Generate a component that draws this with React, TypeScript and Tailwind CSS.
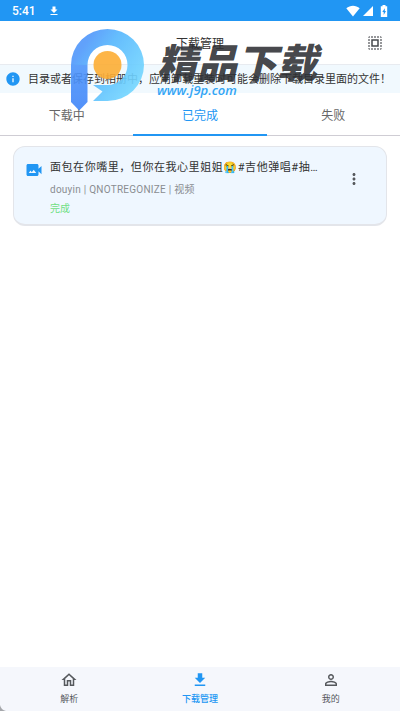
import React from "react";
import { MdDownload, MdSelectAll, MdInfo, MdMoreVert } from "react-icons/md";
import { MdOutlineHome, MdPersonOutline, MdSignalCellular4Bar } from "react-icons/md";

function StatusBar() {
  return (
    <div className="flex h-[21px] items-center bg-[#2196f3] px-3 pt-px text-white">
      <span className="font-[Roboto,sans-serif] text-xs leading-5 font-medium">5:41</span>
      <MdDownload className="ml-3 size-3" />
      <div className="ml-auto flex items-center gap-0.5">
        <svg viewBox="0 0 14 12" className="h-3 w-3.5" fill="currentColor">
          <path d="M0.3 3.2C4.2-.2 9.8-.2 13.7 3.2L7 11.6Z" />
        </svg>
        <MdSignalCellular4Bar className="size-3" />
        <svg viewBox="0 0 8 12" className="ml-1 h-3 w-2" fill="currentColor">
          <path fillRule="evenodd" d="M2.5 0h3v1.2H7.2V12H.8V1.2h1.7ZM4.8 3.2 2.3 7h1.4v3L6 6H4.8Z" />
        </svg>
      </div>
    </div>
  );
}

function Watermark() {
  return (
    <div className="pointer-events-none absolute top-7 left-[70px] flex">
      <svg viewBox="0 0 76 84" className="h-[84px] w-[76px] shrink-0">
        <defs>
          <linearGradient id="ring" gradientUnits="userSpaceOnUse" x1="4" y1="30" x2="60" y2="68">
            <stop offset="0" stopColor="#5097fb" />
            <stop offset="0.35" stopColor="#55b7fd" />
            <stop offset="1" stopColor="#74d7ff" />
          </linearGradient>
          <linearGradient id="stem" x1="0" y1="0" x2="0" y2="1">
            <stop offset="0" stopColor="#5097fb" />
            <stop offset="1" stopColor="#3f85f9" />
          </linearGradient>
        </defs>
        <g opacity="0.9">
          <path fill="url(#ring)" d="M1 37A36.500 36 0 1 1 37.500 73H23L32.500 63.500L23 57H37.500A20 20 0 1 0 17.500 37Z" />
          <path fill="url(#stem)" d="M1 37H17.500V74L9.200 82.500L1 74Z" />
          <circle cx="37.500" cy="37" r="14" fill="#fdae35" />
        </g>
      </svg>
      <div className="flex flex-col pt-3 pl-[11px] italic">
        <span className="font-['Noto_Sans_CJK_SC',sans-serif] text-[40px] leading-[42px] font-black whitespace-nowrap text-[#2e3034]/90">精品下载</span>
        <span className="font-['Open_Sans',sans-serif] text-[13px] leading-4 font-semibold text-[#33a5f5]">www.j9p.com</span>
      </div>
    </div>
  );
}

function DownloadCard() {
  return (
    <article className="mx-[13px] mt-2.5 flex h-20 rounded-xl border border-b-2 border-[#e3e5ea] bg-[#eff7ff] pr-5 pl-[11px]">
      <svg viewBox="0 0 24 24" className="mt-3.5 size-[18px] shrink-0" fill="#2196f3">
        <path fillRule="evenodd" d="M18 10.480V6c0-1.100-.9-2-2-2H4c-1.100 0-2 .9-2 2v12c0 1.100.9 2 2 2h12c1.100 0 2-.9 2-2v-4.480l4 3.980v-11l-4 3.980zM5 16l2.380-3.170L9 15l2.620-3.500L15 16H5z" />
      </svg>
      <div className="min-w-0 flex-1 pt-2.5 pl-[7px]">
        <h2 className="truncate text-[11px] leading-[22px] tracking-wider text-[#333]">面包在你嘴里，但你在我心里姐姐😭#吉他弹唱#抽…</h2>
        <p className="text-[10px] leading-[22px] tracking-wide text-[#8a8d91]">douyin | QNOTREGONIZE | 视频</p>
        <p className="text-[10px] leading-4 text-[#70df83]">完成</p>
      </div>
      <button aria-label="更多" className="mt-5 flex size-6 shrink-0 items-center justify-center text-[#55585c]">
        <MdMoreVert className="size-[18px]" />
      </button>
    </article>
  );
}

const tabs = ["下载中", "已完成", "失败"];
const nav = [
  { label: "解析", Icon: MdOutlineHome },
  { label: "下载管理", Icon: MdDownload },
  { label: "我的", Icon: MdPersonOutline },
];

export default function App() {
  return (
    <div className="relative flex min-h-screen flex-col overflow-hidden bg-white font-[Roboto,'Noto_Sans_CJK_SC',sans-serif]">
      <StatusBar />
      <header className="relative flex h-11 items-center justify-center border-b border-[#e8ebf0]">
        <h1 className="pt-0.5 text-xs text-[#333]">下载管理</h1>
        <button aria-label="全选" className="absolute right-4 text-[#45484c]">
          <MdSelectAll className="size-[18px]" />
        </button>
      </header>
      <div className="flex h-7 items-center bg-[#f1f9fe] pl-[5px] text-[#333]">
        <MdInfo className="size-4 shrink-0 text-[#2196f3]" />
        <p className="ml-[7px] pt-0.5 text-[11px] whitespace-nowrap">目录或者保存到相册中，应用卸载重装时可能会删除下载目录里面的文件！</p>
      </div>
      <div role="tablist" className="grid h-[43px] grid-cols-3 text-xs">
        {tabs.map((label, i) => (
          <button
            key={label}
            role="tab"
            aria-selected={i === 1}
            className={i === 1 ? "border-b-2 border-[#2196f3] pt-1 text-[#2196f3]" : "border-b border-[#cfcdd4] pt-1 text-[#666]"}
          >
            {label}
          </button>
        ))}
      </div>
      <main className="flex-1">
        <DownloadCard />
      </main>
      <nav className="relative grid h-11 grid-cols-3 bg-[#f5f7fc] px-1 text-[9px]">
        {nav.map(({ label, Icon }, i) => (
          <button key={label} className={`flex flex-col items-center gap-0.5 pt-1 ${i === 1 ? "font-medium text-[#2196f3]" : "text-[#55585c]"}`}>
            <Icon className="size-[18px]" />
            <span className="leading-4">{label}</span>
          </button>
        ))}
        <svg viewBox="0 0 6 6" className="absolute bottom-0 left-0 size-1.5" fill="#a5a7ab">
          <path d="M0 0Q1 5 6 6H0Z" />
        </svg>
      </nav>
      <Watermark />
    </div>
  );
}
